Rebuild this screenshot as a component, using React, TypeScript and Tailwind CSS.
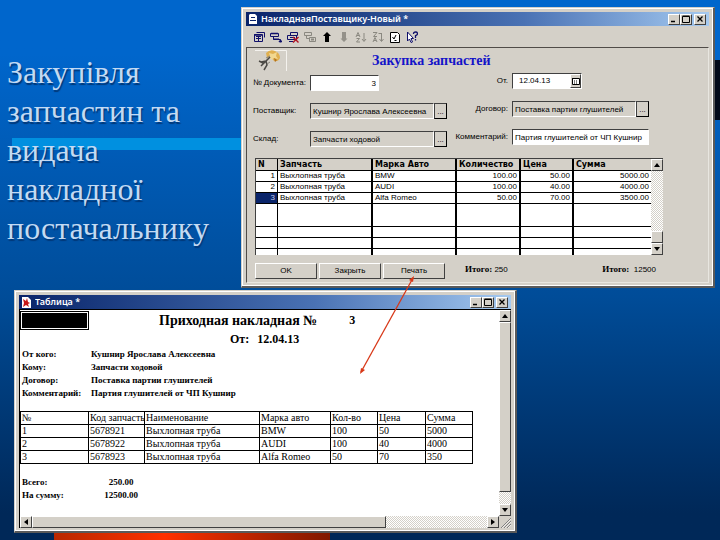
import type { ReactNode } from "react";

const raised =
  "border border-t-white border-l-white border-r-[#404040] border-b-[#404040] bg-[#d4d0c8]";
const sunken =
  "border border-t-[#404040] border-l-[#404040] border-r-white border-b-white";
const track =
  "bg-[repeating-conic-gradient(#ffffff_0_25%,#d4d0c8_0_50%)] bg-[length:2px_2px]";

type Direction = "up" | "down" | "left" | "right";

const arrowPoints: Record<Direction, string> = {
  up: "1,6 4,2 7,6",
  down: "1,2 7,2 4,6",
  left: "6,1 2,4 6,7",
  right: "2,1 6,4 2,7",
};

function ScrollButton({ direction }: { direction: Direction }) {
  return (
    <button
      type="button"
      aria-label={`Scroll ${direction}`}
      className={`flex h-3 w-3 shrink-0 items-center justify-center ${raised}`}
    >
      <svg viewBox="0 0 8 8" className="h-2 w-2 shrink-0" aria-hidden="true">
        <polygon points={arrowPoints[direction]} fill="#000" />
      </svg>
    </button>
  );
}

function CaptionButton({ label, children }: { label: string; children: ReactNode }) {
  return (
    <button
      type="button"
      aria-label={label}
      className={`flex h-[11px] w-3 items-center justify-center ${raised}`}
    >
      <svg viewBox="0 0 8 8" className="h-2 w-2 shrink-0" fill="none" stroke="#000" aria-hidden="true">
        {children}
      </svg>
    </button>
  );
}

function Window({ title, icon, className, children }: {
  title: string;
  icon: ReactNode;
  className: string;
  children: ReactNode;
}) {
  return (
    <section
      className={`border-t border-l border-r-2 border-b-2 border-t-[#d4d0c8] border-l-[#d4d0c8] border-r-[#5a5a5a] border-b-[#5a5a5a] ${className}`}
    >
      <div className="border border-white bg-[#d4d0c8] px-[3px] pt-[3px] pb-0.5">
        <header className="flex h-[14px] items-center gap-1 bg-linear-to-r from-[#0a246a] via-[#4a72b4] via-60% to-[#a6caf0] px-[3px]">
          {icon}
          <h2 className="flex-1 truncate font-['Noto_Sans',sans-serif] text-[9px] leading-3 font-semibold text-white">
            {title}
          </h2>
          <div className="flex">
            <CaptionButton label="Minimize">
              <path d="M1 6.5h4" strokeWidth="1.5" />
            </CaptionButton>
            <CaptionButton label="Maximize">
              <path d="M.5 1.5h7v6h-7zM.5 1h7" />
            </CaptionButton>
            <span className="w-0.5" />
            <CaptionButton label="Close">
              <path d="M1.5 1.5l5 5M6.5 1.5l-5 5" strokeWidth="1.3" />
            </CaptionButton>
          </div>
        </header>
        {children}
      </div>
    </section>
  );
}

const tools: { label: string; art: ReactNode }[] = [
  {
    label: "New row",
    art: (
      <g stroke="#10106a">
        <path d="M3.500 1.500h8v5M1.500 3.500h8v7h-8zM3 5.500h5M3 7.500h5M5.500 5v5" fill="none" />
        <path d="M1 4h8" strokeWidth="1.500" />
      </g>
    ),
  },
  {
    label: "Edit row",
    art: (
      <g stroke="#10106a" fill="none">
        <path d="M.5 2.500h8v3h-8zM3.500 5.500v3h7v3M3 8h6" />
        <path d="M1 2.500h7M9 11l1.500-1.500L12 11" strokeWidth="1.500" />
      </g>
    ),
  },
  {
    label: "Delete row",
    art: (
      <g fill="none">
        <path d="M3.500 1.500h7v3h-7zM.5 4.500h9v4h-9zM3 6.500h5M2 10.500h4" stroke="#10106a" />
        <path d="M6 6l5.500 5.500M11.500 6L6 11.500" stroke="#b01020" strokeWidth="1.400" />
      </g>
    ),
  },
  {
    label: "Copy row",
    art: (
      <g stroke="#8a8880" fill="none">
        <path d="M.5 1.500h7v3h-7zM2.500 4.500v3h3M5.500 6.500h6v4h-6z" />
        <path d="M7 8.500h3" strokeWidth="2" />
      </g>
    ),
  },
  { label: "Move up", art: <path d="M6 1L10 5H8v6H4V5H2z" fill="#000" /> },
  { label: "Move down", art: <path d="M6 11L9.500 7.500H8V1H4v6.500H2.500z" fill="#94918a" /> },
  {
    label: "Sort ascending",
    art: (
      <g stroke="#8a8880" fill="none">
        <path d="M1 6l2-4.500L5 6M2 4.500h2M1.500 7.500h3l-3 3.500h3.500M9 2v8M7 8l2 2.500L11 8" />
      </g>
    ),
  },
  {
    label: "Sort descending",
    art: (
      <g stroke="#8a8880" fill="none">
        <path d="M1 1.500h4L1.500 5.500h3.500M1 11l2-4.500L5 11M2 9.500h2M6.500 2.500h3M9.500 2v8M7.500 8l2 2.500L11.500 8" />
      </g>
    ),
  },
  {
    label: "Properties",
    art: (
      <g stroke="#000">
        <path d="M1.500 1.500h7l2 2v8h-9z" fill="#fff" />
        <path d="M3.500 6l1.500 2 2-4M5.500 9.500h2" fill="none" />
      </g>
    ),
  },
  {
    label: "Help",
    art: (
      <g>
        <path d="M1.500 1v9l2-2 1.500 3.500L6.500 11 5 7.500h2.500z" fill="#fff" stroke="#10106a" />
        <path d="M7.500 3q0-2 2-2t2 1.700q0 1-2 2V7M9.500 8v1.500" fill="none" stroke="#10106a" strokeWidth="1.300" />
      </g>
    ),
  },
];

function PickField({ id, label, value, labelClass }: {
  id: string;
  label: string;
  value: string;
  labelClass: string;
}) {
  return (
    <div className="flex h-4 items-center">
      <label htmlFor={id} className={labelClass}>{label}</label>
      <input
        id={id}
        defaultValue={value}
        className={`h-4 w-[124px] bg-[#d4d0c8] px-0.5 ${sunken}`}
      />
      <button
        type="button"
        aria-label={`${label} …`}
        className="flex h-4 w-[13px] items-end justify-center border border-t-[#404040] border-l-[#404040] border-r-black border-b-black bg-[#d4d0c8] leading-3"
      >
        ...
      </button>
    </div>
  );
}

const orderRows = [
  ["1", "Выхлопная труба", "BMW", "100.00", "50.00", "5000.00"],
  ["2", "Выхлопная труба", "AUDI", "100.00", "40.00", "4000.00"],
  ["3", "Выхлопная труба", "Alfa Romeo", "50.00", "70.00", "3500.00"],
];
const blankRows = ["h-[23px]", "h-[11px]", "h-[11px]", "h-1.5"];

function OrderTable() {
  const headCell = "border-b border-r-2 border-black px-0.5 text-left font-bold";
  return (
    <div className="mt-[11px] mr-[45px] ml-2 flex border-t border-l border-[#404040] bg-white">
      <table className="min-w-0 flex-1 table-fixed border-separate border-spacing-0 leading-[10px]">
        <colgroup>
          <col className="w-[22px]" />
          <col className="w-[95px]" />
          <col className="w-[84px]" />
          <col className="w-16" />
          <col className="w-[53px]" />
          <col />
        </colgroup>
        <thead>
          <tr className="h-3 bg-[#d4d0c8] font-['DejaVu_Sans',sans-serif] text-[8px]">
            <th className="border-r border-b border-black px-0.5 text-left font-bold">N</th>
            <th className={headCell}>Запчасть</th>
            <th className={headCell}>Марка Авто</th>
            <th className={headCell}>Количество</th>
            <th className={headCell}>Цена</th>
            <th className="border-b border-black px-0.5 text-left font-bold">Сумма</th>
          </tr>
        </thead>
        <tbody>
          {orderRows.map((row, r) => (
            <tr key={row[0]} className="h-[11px]">
              {row.map((cell, c) => (
                <td
                  key={c}
                  className={`border-b border-black ${
                    c === 0 ? "border-r px-0.5 text-right" : c < 5 ? "border-r-2 px-0.5" : "px-0.5"
                  } ${c > 2 ? "text-right" : ""} ${
                    r === 2 && c === 0 ? "bg-[#0a246a] text-[#c8c8e8]" : ""
                  }`}
                >
                  {cell}
                </td>
              ))}
            </tr>
          ))}
          {blankRows.map((height, r) => (
            <tr key={r} className={height}>
              {[0, 1, 2, 3, 4, 5].map((c) => (
                <td
                  key={c}
                  className={`border-black p-0 ${r < 3 ? "border-b" : ""} ${
                    c === 0 ? "border-r" : c < 5 ? "border-r-2" : ""
                  }`}
                />
              ))}
            </tr>
          ))}
        </tbody>
      </table>
      <div className={`flex w-3 flex-col ${track}`}>
        <ScrollButton direction="up" />
        <div className="flex-1" />
        <div className={`h-3 ${raised}`} />
        <ScrollButton direction="down" />
      </div>
    </div>
  );
}

function OrderWindow() {
  const leftLabel = "w-[57px] shrink-0 whitespace-nowrap";
  const rightLabel = "w-[65px] shrink-0 pr-1 text-right whitespace-nowrap";
  const action = `h-4 w-[62px] ${raised}`;
  return (
    <Window
      className="min-w-0 flex-1"
      title="НакладнаяПоставщику-Новый *"
      icon={
        <svg viewBox="0 0 8 10" className="h-2.5 w-2" aria-hidden="true">
          <path d="M1 0h5l2 2v8H0V1z" fill="#fff" />
          <path d="M2 3.500h4M1 6.500h6" stroke="#0a246a" />
        </svg>
      }
    >
      <div role="toolbar" aria-label="Накладная" className="flex h-[21px] items-center px-1">
        {tools.map((tool) => (
          <button
            key={tool.label}
            type="button"
            aria-label={tool.label}
            className="flex w-[17px] justify-center"
          >
            <svg viewBox="0 0 12 12" className="h-3 w-3" aria-hidden="true">{tool.art}</svg>
          </button>
        ))}
      </div>
      <form
        className="border border-t-[#504c48] border-l-[#504c48] border-r-[#e8e6e0] border-b-[#e8e6e0] font-['Liberation_Sans',Arial,sans-serif] text-[8px] leading-3 text-black"
        onSubmit={(event) => event.preventDefault()}
      >
        <div className="flex h-[25px] items-center gap-[85px] pl-2">
          <svg viewBox="0 0 32 21" className="h-[21px] w-8" aria-hidden="true">
            <path d="M0 .5h31.500V21" stroke="#f4f2ee" fill="none" />
            <path d="M11 3q4-4 9-2t5 7q-2 4-6 3l-3-4-4 1z" fill="#e0b050" />
            <path d="M14 3l4 1 4-2-1 4 2 3-4-1-3 2z" fill="#f2d890" />
            <path d="M19 8l3 2-2 2z" fill="#b07020" />
            <path d="M15 7l-4 4-5 1M11 11l1 4-3 5M11 11L6 16M4 11l4 2" stroke="#4a4844" strokeWidth="1.500" fill="none" />
            <path d="M11 8l4-2M12 14l3-2" stroke="#8a867c" />
          </svg>
          <h3 className="font-['Liberation_Serif',serif] text-[14px] leading-4 font-bold text-[#1414c8]">
            Закупка запчастей
          </h3>
        </div>
        <div className="flex pl-1.5">
          <div className="flex w-[194px] flex-col gap-3 pt-0.5">
            <div className="flex h-4 items-center">
              <label htmlFor="number" className={leftLabel}>№ Документа:</label>
              <input
                id="number"
                defaultValue="3"
                className={`h-4 w-[69px] bg-white px-0.5 text-right ${sunken}`}
              />
            </div>
            <PickField id="supplier" label="Поставщик:" value="Кушнир Ярослава Алексеевна" labelClass={leftLabel} />
            <PickField id="store" label="Склад:" value="Запчасти ходовой" labelClass={leftLabel} />
          </div>
          <div className="flex flex-col gap-3">
            <div className="flex h-4 items-center">
              <label htmlFor="date" className={rightLabel}>От.</label>
              <div className={`flex h-4 w-[70px] items-center bg-white ${sunken}`}>
                <input id="date" defaultValue="12.04.13" className="min-w-0 flex-1 pl-1.5" />
                <button
                  type="button"
                  aria-label="Календарь"
                  className={`flex h-3.5 w-[11px] items-center justify-center ${raised}`}
                >
                  <svg viewBox="0 0 8 8" className="h-2 w-2 shrink-0" aria-hidden="true">
                    <path d="M.5 1.500h7v6h-7z" fill="#fff" stroke="#000" />
                    <path d="M0 1.500h8M2 4h4M2 6h4" stroke="#000" strokeDasharray="1 1" />
                  </svg>
                </button>
              </div>
            </div>
            <PickField id="contract" label="Договор:" value="Поставка партии глушителей" labelClass={rightLabel} />
            <div className="flex h-4 items-center">
              <label htmlFor="comment" className={rightLabel}>Комментарий:</label>
              <input
                id="comment"
                defaultValue="Партия глушителей от ЧП Кушнир"
                className={`h-4 w-[137px] bg-white px-0.5 ${sunken}`}
              />
            </div>
          </div>
        </div>
        <OrderTable />
        <div className="flex h-[27px] items-start gap-0.5 pt-2 pr-[52px] pl-2">
          <button type="submit" className={action}>OK</button>
          <button type="button" className={action}>Закрыть</button>
          <button type="button" className={action}>Печать</button>
          <p className="pl-[18px]">
            <b className="font-['Liberation_Serif',serif] text-[9px]">Итого:</b> 250
          </p>
          <p className="ml-auto">
            <b className="font-['Liberation_Serif',serif] text-[9px]">Итого:</b>&nbsp; 12500
          </p>
        </div>
      </form>
    </Window>
  );
}

const details = [
  ["От кого:", "Кушнир Ярослава Алексеевна"],
  ["Кому:", "Запчасти ходовой"],
  ["Договор:", "Поставка партии глушителей"],
  ["Комментарий:", "Партия глушителей от ЧП Кушнир"],
];
const invoiceHead = ["№", "Код запчасть", "Наименование", "Марка авто", "Кол-во", "Цена", "Сумма"];
const invoiceRows = [
  ["1", "5678921", "Выхлопная труба", "BMW", "100", "50", "5000"],
  ["2", "5678922", "Выхлопная труба", "AUDI", "100", "40", "4000"],
  ["3", "5678923", "Выхлопная труба", "Alfa Romeo", "50", "70", "350"],
];

function InvoiceWindow() {
  return (
    <Window
      className="mt-0.5 mr-[203px] ml-3.5"
      title="Таблица  *"
      icon={
        <svg viewBox="0 0 9 11" className="h-[11px] w-[9px]" aria-hidden="true">
          <path d="M0 0h6l3 3v8H0z" fill="#fff" />
          <path d="M1 2l3 2 1-3 1 4 2 1-2 1 1 3-3-2-3 2 1-4z" fill="#c81818" />
        </svg>
      }
    >
      <div className="flex border-t border-l border-black bg-white">
        <article className="min-w-0 flex-1 pb-3.5 font-['Liberation_Serif','Times_New_Roman',serif] text-[9px] leading-[13px] font-bold text-black">
          <div className="flex h-5 items-center pt-px">
            <div className="h-[19px] w-[69px] border border-black bg-black outline -outline-offset-2 outline-white" />
            <h3 className="ml-[70px] text-[14px] leading-4">Приходная накладная №</h3>
            <span className="ml-8 text-[12px]">3</span>
          </div>
          <div className="flex h-[18px] items-center gap-2 pl-[210px] text-[12px]">
            <span>От:</span>
            <span>12.04.13</span>
          </div>
          <dl className="grid grid-cols-[69px_1fr] px-0.5">
            {details.map(([term, value]) => (
              <div key={term} className="contents">
                <dt className="whitespace-nowrap">{term}</dt>
                <dd>{value}</dd>
              </div>
            ))}
          </dl>
          <table className="mt-[11px] w-[453px] table-fixed border-separate border-spacing-0 border-t border-l border-black text-[10px] leading-3 font-normal">
            <colgroup>
              <col className="w-[68px]" />
              <col className="w-14" />
              <col className="w-[115px]" />
              <col className="w-[71px]" />
              <col className="w-[47px]" />
              <col className="w-12" />
              <col className="w-[47px]" />
            </colgroup>
            <thead>
              <tr>
                {invoiceHead.map((name) => (
                  <th
                    key={name}
                    className="overflow-hidden border-r border-b border-black p-0 pl-px text-left font-normal whitespace-nowrap"
                  >
                    {name}
                  </th>
                ))}
              </tr>
            </thead>
            <tbody>
              {invoiceRows.map((row) => (
                <tr key={row[0]}>
                  {row.map((cell, c) => (
                    <td key={c} className="border-r border-b border-black p-0 pl-px">{cell}</td>
                  ))}
                </tr>
              ))}
            </tbody>
          </table>
          <dl className="mt-3 grid grid-cols-[69px_60px] px-0.5">
            <dt>Всего:</dt>
            <dd className="text-center">250.00</dd>
            <dt>На сумму:</dt>
            <dd className="text-center">12500.00</dd>
          </dl>
        </article>
        <div className={`flex w-3 flex-col ${track}`}>
          <ScrollButton direction="up" />
          <div className={`flex-1 ${raised}`} />
          <div className="h-3" />
          <ScrollButton direction="down" />
        </div>
      </div>
      <div className="flex border-l border-black">
        <div className={`flex flex-1 ${track}`}>
          <ScrollButton direction="left" />
          <div className={`h-3 w-[74%] ${raised}`} />
          <div className="flex-1" />
          <ScrollButton direction="right" />
        </div>
        <svg viewBox="0 0 12 12" className="h-3 w-3" aria-hidden="true">
          <path d="M2 12L12 2M5 12l7-7M8 12l4-4" stroke="#808080" />
          <path d="M3 12l9-9M6 12l6-6M9 12l3-3" stroke="#fff" strokeWidth=".6" />
        </svg>
      </div>
    </Window>
  );
}

export default function App() {
  return (
    <main className="relative flex min-h-screen flex-col overflow-hidden bg-linear-to-b from-[#0066cc] from-10% via-[#004c98] via-55% to-[#002858] to-95%">
      <div className="absolute top-[138px] left-3 h-3 w-60 bg-[#0090e0]" />
      <div className="absolute top-[60px] right-0 h-[60px] w-2 bg-[#000818]" />
      <div className="absolute bottom-0 left-[54px] h-2 w-[276px] bg-linear-to-r from-[#b82800] via-[#ff3000] via-40% to-[#801800]" />
      <div className="relative flex pt-[7px] pr-[5px]">
        <h1 className="w-[241px] shrink-0 pt-[46px] pl-[7px] font-['Liberation_Serif','Times_New_Roman',serif] text-[32px] leading-[39px] text-[#c4daf2] text-shadow-[1px_2px_1px_#003878]">
          Закупівля запчастин та видача накладної постачальнику
        </h1>
        <OrderWindow />
      </div>
      <div className="relative">
        <InvoiceWindow />
      </div>
      <svg
        viewBox="0 0 60 104"
        className="pointer-events-none absolute top-[273px] left-[357px] h-[104px] w-[60px]"
        fill="#d83818"
        aria-hidden="true"
      >
        <path d="M56 5L4 99" stroke="#d83818" strokeWidth="1.300" />
        <path d="M57 3l-5 4 4 2zM3 101l1-6 4 2z" />
      </svg>
    </main>
  );
}
